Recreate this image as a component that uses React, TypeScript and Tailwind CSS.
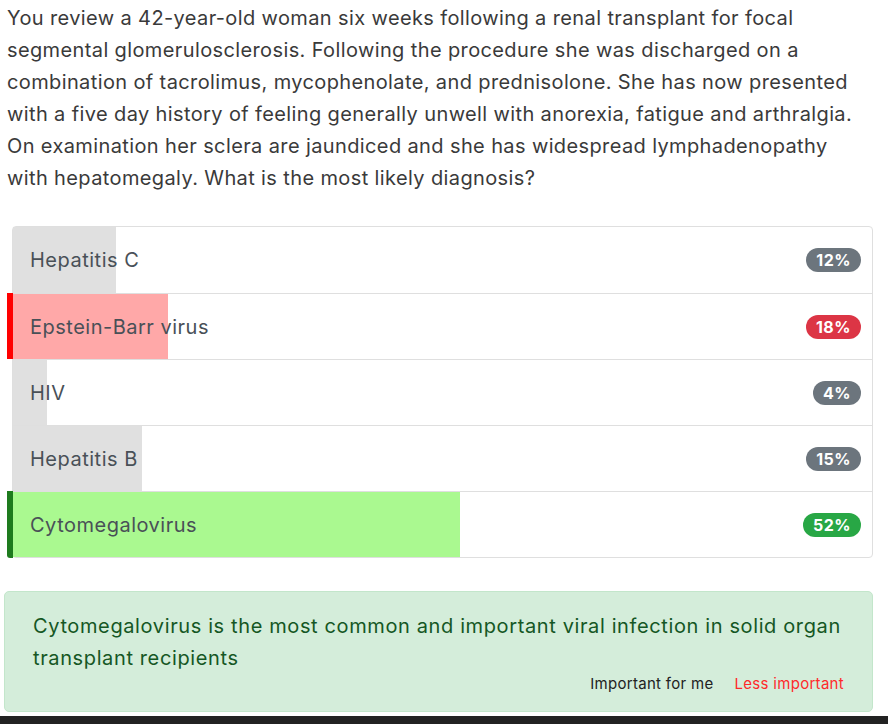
import React from 'react';

interface Option {
  label: string;
  percent: number;
  state: 'none' | 'wrong' | 'correct';
}

const options: Option[] = [
  { label: 'Hepatitis C', percent: 12, state: 'none' },
  { label: 'Epstein-Barr virus', percent: 18, state: 'wrong' },
  { label: 'HIV', percent: 4, state: 'none' },
  { label: 'Hepatitis B', percent: 15, state: 'none' },
  { label: 'Cytomegalovirus', percent: 52, state: 'correct' },
];

const font = { fontFamily: 'Inter, "Liberation Sans", Arial, sans-serif' };

export default function App() {
  return (
    <div className="w-[888px] h-[724px] bg-white overflow-hidden flex flex-col" style={font}>
      <div className="pl-[7px] pr-[15px] flex-1">
        {/* 질문 */}
        <p className="pt-[2px] text-[20px] leading-[32px] tracking-[0.38px] text-[#3a3a3a]">
          You review a 42-year-old woman six weeks following a renal transplant for focal segmental
          glomerulosclerosis. Following the procedure she was discharged on a combination of tacrolimus,
          mycophenolate, and prednisolone. She has now presented with a five day history of feeling
          generally unwell with anorexia, fatigue and arthralgia. On examination her sclera are
          jaundiced and she has widespread lymphadenopathy with hepatomegaly. What is the most likely
          diagnosis?
        </p>

        {/* 선택지 목록 */}
        <div className="mt-[32px] ml-[5px] border border-[#dfdfdf] rounded-[4px]">
          {options.map((opt, i) => (
            <div
              key={opt.label}
              className={`relative h-[66px] flex items-center justify-between pl-[17px] pr-[11px] ${
                i > 0 ? 'border-t border-[#dfdfdf]' : ''
              }`}
            >
              <div
                className={`absolute left-0 top-0 bottom-0 ${
                  opt.state === 'wrong'
                    ? 'bg-[#ffa8a8]'
                    : opt.state === 'correct'
                    ? 'bg-[#aaf990]'
                    : 'bg-[#e0e0e0]'
                }`}
                style={{ width: `${opt.percent}%` }}
              />
              {opt.state === 'wrong' && (
                <div className="absolute left-[-6px] top-[-1px] bottom-0 w-[6px] bg-[#ff0000]" />
              )}
              {opt.state === 'correct' && (
                <div className="absolute left-[-6px] top-[-1px] bottom-[-1px] w-[6px] bg-[#1e7b1e] rounded-bl-[3px]" />
              )}
              <span className="relative text-[20px] tracking-[0.5px] text-[#495057]">{opt.label}</span>
              <span
                className={`relative h-[24px] px-[10px] rounded-full flex items-center text-white font-bold text-[16px] tracking-[0.5px] ${
                  opt.state === 'wrong'
                    ? 'bg-[#dc3545]'
                    : opt.state === 'correct'
                    ? 'bg-[#28a745]'
                    : 'bg-[#6c757d]'
                }`}
              >
                {opt.percent}%
              </span>
            </div>
          ))}
        </div>

        {/* 해설 */}
        <div className="mt-[33px] -ml-[3px] bg-[#d4edda] border border-[#c3e6cb] rounded-[5px] pl-[28px] pr-[27px] pt-[18px] pb-[15px]">
          <p className="text-[20px] leading-[32px] tracking-[0.62px] text-[#155724]">
            Cytomegalovirus is the most common and important viral infection in solid organ transplant
            recipients
          </p>
          <div className="flex justify-end gap-[21px] -mt-[1px] text-[15px] tracking-[0.3px] pr-[1px]">
            <span className="text-[#222]">Important for me</span>
            <span className="text-[#ff2a2a]">Less important</span>
          </div>
        </div>
      </div>
      <div className="h-[8px] bg-[#222222]" />
    </div>
  );
}
